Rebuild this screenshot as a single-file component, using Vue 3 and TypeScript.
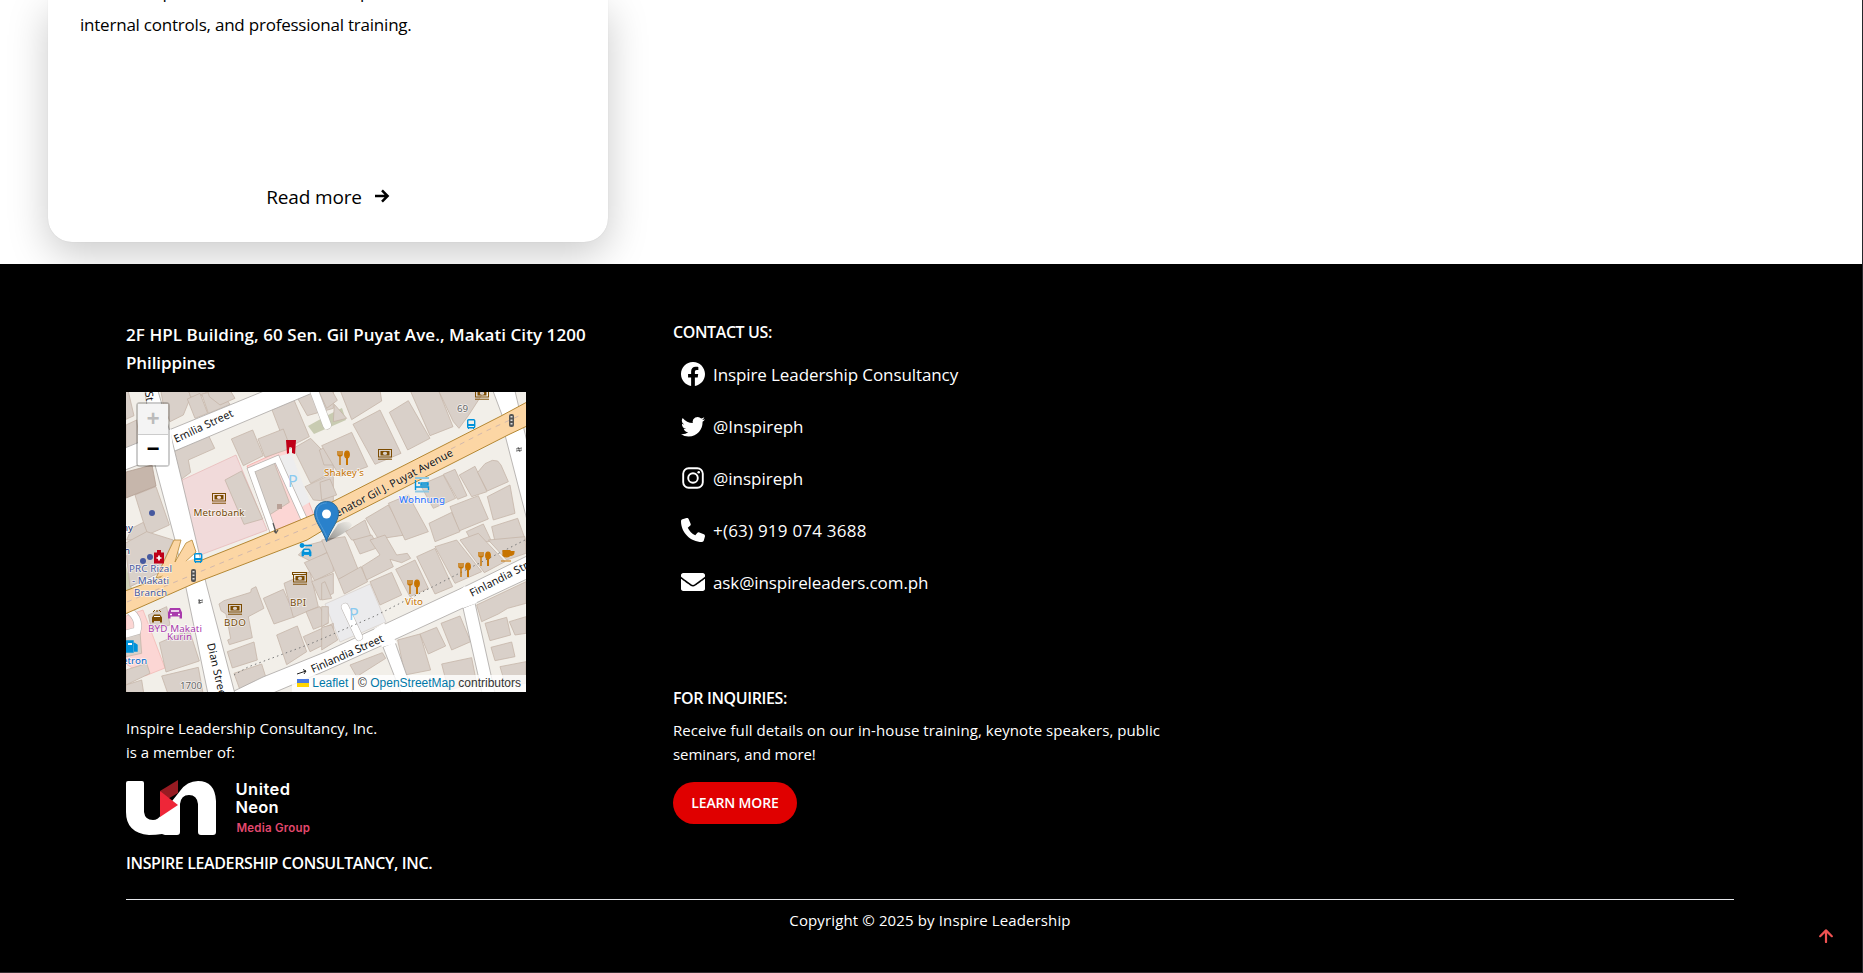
<script setup lang="ts">
interface Contact {
  id: string
  label: string
}

const contacts: Contact[] = [
  { id: 'facebook', label: 'Inspire Leadership Consultancy' },
  { id: 'twitter', label: '@Inspireph' },
  { id: 'instagram', label: '@inspireph' },
  { id: 'phone', label: '+(63) 919 074 3688' },
  { id: 'mail', label: 'ask@inspireleaders.com.ph' },
]

/* Building outlines, split into the four tiles of the map. */
interface Tile {
  transform: string
  shapes: string[]
}

const tiles: Tile[] = [
  {
    transform: 'translate(-6 -7) scale(.33333)',
    shapes: [
      '10,15 25,20 42,92 18,103', '122,15 205,15 212,36 190,90 150,110 130,60', '205,15 255,15 262,30 212,36', '202,42 240,25 263,85 225,100',
      '245,27 300,15 330,58 265,85', '262,15 330,15 345,40 300,60 268,35', '18,120 50,105 60,180 18,190',
      '455,72 520,40 568,155 500,190', '530,35 550,15 640,15 640,70 562,92', '334,162 398,135 430,212 370,242', '414,162 490,132 512,190 435,217',
      '162,200 265,150 284,190 205,225 212,262 184,283', '520,190 572,160 640,230 640,260 572,295', '555,305 640,265 640,350 580,345',
      '45,330 108,305 148,420 82,450', '35,430 70,412 90,465 20,465', '315,285 365,258 428,402 372,418', '398,262 462,232 508,352 440,395',
      '598,195 640,175 640,240 612,240',
    ],
  },
  {
    transform: 'translate(199 -7) scale(.33333)',
    shapes: [
      '-20,15 20,15 37,46 5,70', '28,58 65,100 25,110', '45,15 165,15 170,48 80,104', '84,118 165,75 228,205 150,238', '193,82 250,47 315,160 248,195',
      '255,15 340,15 384,125 315,152', '340,15 480,15 430,92 402,130 385,110', '-10,182 80,142 128,245 45,275', '-15,292 15,282 35,330 -10,345',
      '62,440 120,405 142,465 80,465', '122,400 190,360 240,450 160,462', '190,355 250,330 310,440 240,465', '286,300 355,270 392,340 325,370',
      '355,268 390,253 426,332 398,343', '403,270 450,244 486,320 440,335', '458,262 480,236 502,226 518,228 528,240 550,290 487,318',
      '375,365 460,332 490,402 402,438', '487,335 555,300 570,385 505,405', '312,415 380,382 405,440 330,470', '424,440 475,417 500,470 440,470', '500,425 578,400 603,470 510,470',
    ],
  },
  {
    transform: 'translate(-6 148) scale(.33333)',
    shapes: [
      '15,10 80,-25 160,0 115,100 30,140', '85,225 140,200 150,255 95,270', '118,308 208,270 238,363 138,396', '125,408 235,382 250,465 145,465',
      '18,290 60,275 65,340 18,350', '18,390 80,370 90,400 18,435', '18,435 65,420 72,465 18,465',
      '297,192 312,182 392,157 394,147 408,140 432,205 385,230 397,293 328,314 323,300 332,296 318,222 303,212',
      '322,335 402,306 412,360 337,384', '342,400 425,372 437,410 360,450', '430,175 490,148 525,230 462,252', '492,130 570,95 595,200 520,232',
      '535,45 565,15 640,-5 640,25 575,65', '553,68 640,30 640,95 584,122', '575,125 640,100 640,160 600,180', '470,285 532,258 560,335 500,374', '550,290 640,250 640,300 570,335', '558,215 600,200 625,250 580,268',
    ],
  },
  {
    transform: 'translate(199 148) scale(.33333)',
    shapes: [
      '-10,0 60,-10 100,90 40,118', '85,0 140,-15 162,22 105,42', '40,118 108,80 128,125 58,162', '110,80 145,58 165,45 135,0 180,-15 215,45 247,40 257,55 230,68 195,58 205,80 125,120',
      '135,125 200,97 230,165 165,195', '212,88 270,60 310,145 255,170', '275,50 330,25 383,140 330,162', '330,20 395,0 470,95 390,130', '405,0 460,-20 540,65 478,98', '490,0 600,-10 603,40 545,60', '-10,130 0,125 20,175 -10,180', '-10,200 10,200 10,248 -10,260', '-10,262 20,255 38,300 -10,330',
      '218,300 285,282 317,390 240,405', '285,282 335,262 362,318 310,342', '348,250 405,228 437,305 380,330', '350,372 440,353 455,430 370,450', '75,375 172,338 182,355 95,410', '455,195 603,125 603,190 548,205 520,222 470,245', '480,250 545,232 557,285 495,302', '553,245 603,230 603,280 570,285', '498,322 560,306 570,350 510,362', '525,380 603,365 603,430 540,430',
    ],
  },
]
</script>

<template>
  <div class="page">
    <main class="listing">
      <article class="card">
        <div class="previous-line" aria-hidden="true"><span>p</span><span>p</span><span>,</span></div>
        <p class="excerpt">internal controls, and professional training.</p>
        <a class="more"><span>Read more</span>
          <svg viewBox="0 0 16 14" width="16" height="14"><path d="M1 7h12M8 1.400 13.600 7 8 12.600" fill="none" stroke="#000" stroke-width="2.500" /></svg>
        </a>
      </article>
    </main>

    <footer class="footer">
      <div class="columns">
        <section class="about">
          <h2 class="address">2F HPL Building, 60 Sen. Gil Puyat Ave., Makati City 1200<br><span class="country">Philippines</span></h2>

          <div class="map">
            <svg class="tiles" viewBox="0 0 400 300" width="400" height="300">
              <rect width="400" height="300" fill="#f2efe9" />
              <path d="M182 34l18-10 16-8 4 12-32 14z" fill="#c8cbb1" />
              <path d="M0 174l8 30-8 3z" fill="#cdcfb5" />
              <path d="M56 88l54-25 31 75-72 27-9-40z" fill="#f1dada" stroke="#e6b5b5" stroke-width=".7" />
              <path d="M121 74l40-18 27 67-44 17z" fill="#fcd6d4" stroke="#f2a9a6" stroke-width=".8" />
              <path d="M150 65l15-4 19 49-12 7z" fill="#ededee" />
              <path d="M0 224l17-6 22 58-20 8-19-12z" fill="#fcd6d4" stroke="#f2b4b0" stroke-width=".7" />
              <path d="M199 212l45-20 16 38-46 20z" fill="#ebebed" stroke="#d6cfca" stroke-width=".7" />
              <g v-for="tile in tiles" :key="tile.transform" :transform="tile.transform" fill="#d9d0c9" stroke="#c5b5a8" stroke-width="2.400">
                <path v-for="shape in tile.shapes" :key="shape" :d="`M${shape}Z`" />
              </g>
              <path d="M0 80l26-7 4 21-30 12z" fill="#c6b6ab" stroke="#b19d90" stroke-width=".8" />
              <!-- secondary streets -->
              <g fill="#fff" stroke="#aaa6a3" stroke-width=".8">
                <path d="M257 255l18 46h12l-18-51z" />
                <path d="M337 216l19 85h13l-20-90z" />
                <path d="M367-1l9 24 3 20 22 85V50L389-1z" />
                <path d="M104 301l33-16 62-25 62-29 81-38 59-29v23l-51 24-13 5-80 37-58 26-52 22z" />
                <path d="M-1 56L138-1h53L44 61l-45 17z" />
                <path d="M19-1l10 74 20 75 10 43 23 111h27L80 191 70 148 55 85 44 40 32-1z" />
              </g>
              <g fill="#fff"><path d="M20 49l25-12 2 23-19 9zM258 231l13 20-15 4-8-18zM339 194l12 17-14 5-7-15z" /></g>
              <g fill="none" stroke="#b9b4b0" stroke-linecap="round">
                <path d="M149 145L125 78l26-11 27 60" stroke-width="7" /><path d="M149 145L125 78l26-11 27 60" stroke="#fff" stroke-width="5.500" />
                <path d="M187-4l14 37" stroke-width="9" /><path d="M187-4l14 37" stroke="#fff" stroke-width="8" />
                <path d="M219 215l14 30" stroke-width="8" /><path d="M219 215l14 30" stroke="#fff" stroke-width="7" />
                <path d="M5 220q9 8 6 19l-11 3" stroke-width="8" /><path d="M5 220q9 8 6 19l-11 3" stroke="#fff" stroke-width="7" />
              </g>
              <!-- avenue -->
              <path d="M48 148L30 186l17-5 23-21-4-12-6 3-11 19 6-22z" fill="#fcd6a4" stroke="#b48733" stroke-width=".8" />
              <path d="M-1 199l48-18 29-13 50-20 65-27 15-11 169-86 26-14v24l-19 9-171 87-30 18-112 43-70 31z" fill="#fcd6a4" stroke="#b48733" stroke-width="1" />
              <path d="M32 188l17-16 11-3 12-3 4 5-25 11z" fill="#fcd6a4" />
              <path d="M1 210l65-27 90-37 36-15M325 57l35-18 35-16" fill="none" stroke="#d2b8ac" stroke-dasharray="5 5" />
              <path d="M108 283l14-8 62-23 65-28 150-76" fill="none" stroke="#777" stroke-width="1" stroke-dasharray="1.500 3.200" />
              <!-- markers and shops -->
              <g fill="#46599f"><circle cx="26" cy="121" r="3" /><circle cx="17" cy="169" r="3" /><circle cx="24" cy="165" r="3" /></g>
              <path d="M147 131l3 10m-2-2 2 2 2-3" fill="none" stroke="#555" stroke-width="1.200" />
              <path d="M160 48l10 0-1 14-3-1v-5q-2-2-3 0v5l-2 1z" fill="#bf0018" />
              <rect x="151" y="112" width="5" height="5" fill="#b9a197" />
              <g fill="#7b4b00">
                <g v-for="p in [[86, 101], [252, 57], [102, 212], [349, -3], [167, 182]]" :key="p.join()" :transform="`translate(${p[0]} ${p[1]})`">
                  <path fill-rule="evenodd" d="M0 0h14v8.500H0zM1 1v6.500h12V1z" /><path fill-rule="evenodd" d="M2.500 2h9v4.500h-9zM7 2.700a2.200 1.600 0 100 3.200 2.200 1.600 0 000-3.200z" /><path d="M0 9.700h14v1H0z" />
                </g>
                <path d="M166 180h15v3h-1v-2h-13v2h-1z" />
              </g>
              <g fill="none" stroke="#c77400" stroke-width="1.200">
                <g v-for="p in [[212, 59], [282, 188], [333, 171], [353, 160]]" :key="p.join()" :transform="`translate(${p[0]} ${p[1]})`">
                  <path d="M0 0v4q2 2 4 0V0M2 0v14" stroke-width="1.400" /><ellipse cx="9" cy="3.500" rx="2.300" ry="3.300" fill="#c77400" /><path d="M9 5v9" stroke-width="2" />
                </g>
                <path d="M377 158.500h7v5q-3.500 3-7 0zM384 159.500h4q0 4-4 4M375 169h10" fill="#c77400" />
              </g>
              <g fill="none" stroke="#0092da" stroke-width="1.400">
                <g v-for="p in [[341, 27], [68, 161]]" :key="p.join()" :transform="`translate(${p[0]} ${p[1]})`"><rect x=".7" y=".7" width="7" height="8" rx="1" /><path d="M0 6h8M1 9h1M6 9h1" stroke-width="2" /></g>
                <path d="M289.500 88v10m0-3h13v3M292 91h2m1 2h7v-2h-7z" /><path d="M289 86h14M289 99.500h14" stroke="#8ec8e2" stroke-width="2" />
                <path d="M176 153.500h10" stroke-width="1.600" /><circle cx="176" cy="153.500" r="1.700" fill="#0092da" /><path d="M176 164v-4l1.500-3h6l1.500 3v4h-1.500v-1.500h-6v1.500z" fill="#0092da" stroke-width=".8" /><path d="M178.300 159h4.500" stroke="#fff" stroke-width="1.500" />
                <path d="M0 249h7v11H0zM8 251l3 2v6h-3" fill="#0092da" /><path d="M2 252h4" stroke="#fff" stroke-width="2" />
              </g>
              <path d="M42 226.500v-6l2-4.500h10l2 4.500v6h-2.500v-2h-9v2z" fill="#a93aad" /><path d="M45 219h8M44 222.500h2m6 0h2" stroke="#fff" stroke-width="1.400" />
              <path d="M26 230.500v-5l2-3h6l2 3v5h-2v-1.500h-6v1.500z" fill="#7b4b00" /><path d="M28 224.500h6" stroke="#fff" /><path d="M27 220l2-2m2 2v-2m4 2-2-2" stroke="#7b4b00" />
              <path d="M28 160.500h3v-2.500h4v2.500h3v11H28z" fill="#bf0018" /><path d="M30.500 166h5m-2.500-2.500v5" stroke="#fff" stroke-width="1.700" />
              <g v-for="p in [[65, 177], [383, 22]]" :key="p.join()" :transform="`translate(${p[0]} ${p[1]})`"><rect width="5" height="13" rx="2" fill="#555" /><path d="M2.500 2v1.500m0 2v1.500m0 2v1.500" stroke="#ddd" stroke-width="2" /></g>
              <path d="M72 209l5-1m-5 3 5-1m-4-3 1 5M390 57l6-1m-6 3 6-1m-4-3 2 5" stroke="#555" stroke-width=".9" />
              <path d="M171 282l9-3m-3-1.500 3 1.500-2 3" fill="none" stroke="#222" />
              <!-- names -->
              <g class="halo" fill="#734a08" font-size="9.800">
                <text x="67.500" y="124" textLength="51">Metrobank</text><text x="98" y="234" textLength="22">BDO</text><text x="164" y="214" textLength="16">BPI</text>
                <text x="54" y="297" fill="#666" textLength="22">1700</text><text x="331" y="19.500" fill="#666" textLength="11">69</text>
                <text x="198" y="84" fill="#c77400" textLength="40">Shakey's</text><text x="279" y="213" fill="#c77400" textLength="18">Vito</text>
                <text x="273" y="111" fill="#1a6dff" textLength="46">Wohnung</text><text x="-4" y="272" fill="#0066cc" textLength="25">etron</text>
                <text x="3" y="180" fill="#46599f" textLength="43">PRC Rizal</text><text x="6" y="192" fill="#46599f" textLength="37">- Makati</text><text x="8" y="204" fill="#46599f" textLength="33">Branch</text>
                <text x="22" y="240" fill="#a93aad" textLength="54">BYD Makati</text><text x="41" y="248" fill="#a93aad" textLength="25">Kurin</text>
                <text x="-4" y="139" fill="#223377">ny</text><text x="-2" y="162" fill="#223377">n</text>
              </g>
              <g fill="#8acaf0" font-size="16"><text x="162" y="95">P</text><text x="223" y="228">P</text></g>
              <g class="street" fill="#111" font-size="10.800">
                <text transform="translate(50 51) rotate(-25)" textLength="64">Emilia Street</text>
                <text transform="translate(206 128) rotate(-28)" textLength="138">Senator Gil J. Puyat Avenue</text>
                <text transform="translate(187 281) rotate(-24)" textLength="78">Finlandia Street</text>
                <text transform="translate(346 205) rotate(-27)" textLength="80">Finlandia Street</text>
                <text transform="translate(81 252) rotate(77)" textLength="58">Dian Street</text>
                <text transform="translate(19 0) rotate(82)">St</text>
              </g>
            </svg>
            <div class="zoom"><span class="disabled">+</span><span>−</span></div>
            <svg class="pin" viewBox="0 0 45 42" width="45" height="42">
              <defs><linearGradient id="pin-shade" x1="0" y1="1" x2="1" y2="0"><stop offset="0" stop-color="#222" stop-opacity=".5" /><stop offset="1" stop-color="#222" stop-opacity="0" /></linearGradient></defs>
              <path d="M12 41L24 23q12-5 14 1-4 8-26 17z" fill="url(#pin-shade)" />
              <path d="M12.500.5c-7 0-12 5-12 12 0 8 8 16 12 28 4-12 12-20 12-28 0-7-5-12-12-12z" fill="#2a81cb" stroke="#2e6c97" />
              <path d="M12.500 2c-6 0-10 4-10 10.500 0 7 6 13 10 23" fill="none" stroke="#4f9ad6" /><circle cx="12.500" cy="13" r="4.500" fill="#fff" />
            </svg>
            <div class="credits">
              <svg viewBox="0 0 12 8" width="12" height="8"><path fill="#4c7be1" d="M0 0h12v4H0z" /><path fill="#ffd500" d="M0 4h12v4H0z" /></svg>
              <a>Leaflet</a> | © <a>OpenStreetMap</a> contributors
            </div>
          </div>

          <p class="member">Inspire Leadership Consultancy, Inc.<br>is a member of:</p>
          <svg class="logo" viewBox="0 0 190 58" width="190" height="58">
            <path d="M0 3q0-2 2-2h14q2 0 2 2v29q1 8 9 8 5 0 8-5L54 11Q61 1 72 1q17 0 18 20v31q0 3-3 3H75q-3 0-3-3V24q-1-9-9-9t-9 9v28q0 3-3 3H39l-3-1q-6 1-13 1Q0 53 0 32z" fill="#fff" />
            <path d="M34 11L52 0v13L40 20z" fill="#981b22" /><path d="M34 11l18 14-18 12z" fill="#ee2638" />
            <g font-family="Inter, sans-serif" font-weight="600" fill="#fff" font-size="16.500"><text x="109.500" y="15.300" textLength="54.500">United</text><text x="109.500" y="33" textLength="43">Neon</text><text x="110.500" y="51.800" textLength="73.500" fill="#e3486e" font-size="11.500">Media Group</text></g>
          </svg>
          <h3 class="company">INSPIRE LEADERSHIP CONSULTANCY, INC.</h3>
        </section>

        <section class="contact">
          <h3 class="title">CONTACT US:</h3>
          <ul>
            <li v-for="c in contacts" :key="c.id">
              <svg v-if="c.id === 'facebook'" viewBox="0 0 16 16"><path d="M16 8.049c0-4.446-3.582-8.050-8-8.050C3.580 0-.002 3.603-.002 8.050c0 4.017 2.926 7.347 6.750 7.951v-5.625h-2.030V8.050H6.750V6.275c0-2.017 1.195-3.131 3.022-3.131.876 0 1.791.157 1.791.157v1.980h-1.009c-.993 0-1.303.621-1.303 1.258v1.510h2.218l-.354 2.326H9.250V16c3.824-.604 6.750-3.934 6.750-7.951z" /></svg>
              <svg v-else-if="c.id === 'twitter'" viewBox="0 0 16 16"><path d="M5.026 15c6.038 0 9.341-5.003 9.341-9.334 0-.14 0-.282-.006-.422A6.685 6.685 0 0 0 16 3.542a6.658 6.658 0 0 1-1.889.518 3.301 3.301 0 0 0 1.447-1.817 6.533 6.533 0 0 1-2.087.793A3.286 3.286 0 0 0 7.875 6.030a9.325 9.325 0 0 1-6.767-3.429 3.289 3.289 0 0 0 1.018 4.382A3.323 3.323 0 0 1 .64 6.575v.045a3.288 3.288 0 0 0 2.632 3.218 3.203 3.203 0 0 1-.865.115 3.230 3.230 0 0 1-.614-.057 3.283 3.283 0 0 0 3.067 2.277A6.588 6.588 0 0 1 .78 13.580a6.320 6.320 0 0 1-.78-.045A9.344 9.344 0 0 0 5.026 15z" /></svg>
              <svg v-else-if="c.id === 'instagram'" viewBox="0 0 24 24"><g fill="none" stroke="#fff" stroke-width="1.900"><rect x="2.200" y="2.200" width="19.600" height="19.600" rx="5.500" /><circle cx="12" cy="12" r="4.800" /></g><circle cx="17.700" cy="6.300" r="1.300" /></svg>
              <svg v-else-if="c.id === 'phone'" viewBox="0 0 512 512"><path d="M164.900 24.600c-7.700-18.600-28-28.500-47.400-23.200l-88 24C12.100 30.200 0 46 0 64C0 311.400 200.600 512 448 512c18 0 33.800-12.100 38.600-29.500l24-88c5.300-19.400-4.600-39.700-23.200-47.400l-96-40c-16.300-6.800-35.200-2.100-46.300 11.600L304.700 368C234.300 334.700 177.300 277.700 144 207.300L193.300 167c13.700-11.200 18.400-30 11.600-46.300l-40-96z" /></svg>
              <svg v-else viewBox="0 0 512 512"><path d="M502.300 190.800c3.900-3.100 9.700-.2 9.700 4.700V400c0 26.500-21.500 48-48 48H48c-26.500 0-48-21.500-48-48V195.600c0-5 5.700-7.800 9.700-4.700 22.400 17.400 52.100 39.500 154.100 113.600 21.100 15.400 56.700 47.800 92.200 47.600 35.700.3 72-32.800 92.300-47.600 102-74.100 131.600-96.300 154-113.700zM256 320c23.200.4 56.600-29.200 73.400-41.400 132.700-96.300 142.800-104.700 173.400-128.700 5.800-4.500 9.200-11.500 9.200-18.900v-19c0-26.500-21.500-48-48-48H48c-26.500 0-48 21.500-48 48v19c0 7.400 3.400 14.300 9.200 18.900 30.600 23.900 40.700 32.400 173.400 128.700 16.800 12.200 50.200 41.800 73.400 41.400z" /></svg>
              <span :class="c.id">{{ c.label }}</span>
            </li>
          </ul>
          <h3 class="title inquiries">FOR INQUIRIES:</h3>
          <p class="details">Receive full details on our in-house training, keynote speakers, public<br><span class="last">seminars, and more!</span></p>
          <button>LEARN MORE</button>
        </section>
      </div>
      <div class="copyright">Copyright © 2025 by Inspire Leadership</div>
      <svg class="top" viewBox="0 0 14 14" width="14" height="14"><path d="M7 13V1.500M1.200 7.200 7 1.400l5.800 5.800" fill="none" stroke="#f05252" stroke-width="2.200" stroke-linecap="round" stroke-linejoin="round" /></svg>
    </footer>
  </div>
</template>

<style>
body { margin: 0; overflow: hidden; }
</style>

<style scoped>
.page { width: 1863px; height: 973px; box-sizing: border-box; border-right: 1px solid #25262b; background: #fff; font-family: "Open Sans", "Noto Sans", sans-serif; overflow: hidden; display: flex; flex-direction: column; }
h2, h3, p, ul { margin: 0; padding: 0; }
.listing { height: 264px; padding-left: 48px; overflow: hidden; flex: none; }
.card { width: 560px; height: 242px; box-sizing: border-box; border-radius: 0 0 24px 24px; background: #fff; box-shadow: 0 0 1px rgba(0,0,0,.15), 0 12px 40px rgba(0,0,0,.21); padding: 0 32px; display: flex; flex-direction: column; }
.previous-line { display: grid; grid-template-columns: 82.500px 197.500px 207px auto; height: 10.500px; line-height: 28px; font-size: 17px; }
.previous-line span { margin-top: -22px; height: 28px; }
.previous-line span:first-child { grid-column: 2; }
.excerpt { font-size: 17px; line-height: 28px; letter-spacing: -.22px; white-space: nowrap; }
.more { margin-top: 144px; display: flex; align-items: center; justify-content: center; gap: 12px; font-size: 19px; line-height: 28px; letter-spacing: -.15px; }
.more svg { margin-bottom: 2px; }
.footer { position: relative; flex: 1; background: #000; color: #fff; border-bottom: 1px solid #332c30; padding: 57px 128px 0 126px; }
.columns { display: flex; height: 578px; border-bottom: 1px solid #e5e7eb; }
.about { width: 547px; white-space: nowrap; }
.address { font-size: 17px; line-height: 28px; font-weight: 600; letter-spacing: .065px; margin-bottom: 15px; }
.country { letter-spacing: -.1px; }
.map { position: relative; width: 400px; height: 300px; overflow: hidden; }
.tiles { display: block; font-family: "Noto Sans", sans-serif; }
.halo text { paint-order: stroke; stroke: rgba(255,255,255,.7); stroke-width: 1.500px; }
.street text { paint-order: stroke; stroke: rgba(255,255,255,.35); stroke-width: 1px; }
.zoom { position: absolute; left: 10px; top: 10px; border: 2px solid rgba(0,0,0,.2); border-radius: 4px; background-clip: padding-box; width: 30px; }
.zoom span { display: block; height: 30px; background: #fff; color: #000; font: bold 22px/32px "Liberation Mono", monospace; text-align: center; }
.zoom .disabled { background: #f4f4f4; color: #bbb; border-bottom: 1px solid #ccc; line-height: 34px; }
.pin { position: absolute; left: 188px; top: 109px; }
.credits { position: absolute; right: 0; bottom: 0; height: 17px; padding: 0 5px; background: rgba(255,255,255,.8); color: #333; font: 12px/17px "Liberation Sans", Arial, sans-serif; }
.credits svg { margin-right: 3px; }
.credits a { color: #0078a8; }
.member { margin-top: 24px; font-size: 15px; line-height: 24px; }
.logo { display: block; margin-top: 16px; }
.company { margin-top: 13px; font-size: 16px; line-height: 24px; font-weight: 600; letter-spacing: -.38px; }
.contact { flex: 1; white-space: nowrap; }
.title { margin-top: -1px; font-size: 16px; line-height: 24px; font-weight: 600; letter-spacing: -.4px; }
ul { list-style: none; margin-top: 4px; }
li { height: 52px; padding-left: 8px; display: flex; align-items: center; gap: 8px; font-size: 17px; line-height: 28px; }
li svg { width: 24px; height: 24px; fill: #fff; }
li span { padding-top: 2px; }
.facebook, .mail { letter-spacing: -.1px; }
.phone { letter-spacing: .22px; }
.inquiries { margin-top: 78px; }
.details { margin-top: 8px; font-size: 15px; line-height: 24px; letter-spacing: .075px; }
.last { letter-spacing: -.06px; }
button { display: block; margin-top: 16px; width: 124px; height: 42px; padding: 0; border: 0; border-radius: 21px; background: #e00000; color: #fff; font: 600 14px/20px "Open Sans", sans-serif; letter-spacing: -.15px; }
.copyright { margin-top: 8px; text-align: center; font-size: 15px; line-height: 24px; letter-spacing: .13px; }
.top { position: absolute; right: 29px; top: 665px; }
</style>
